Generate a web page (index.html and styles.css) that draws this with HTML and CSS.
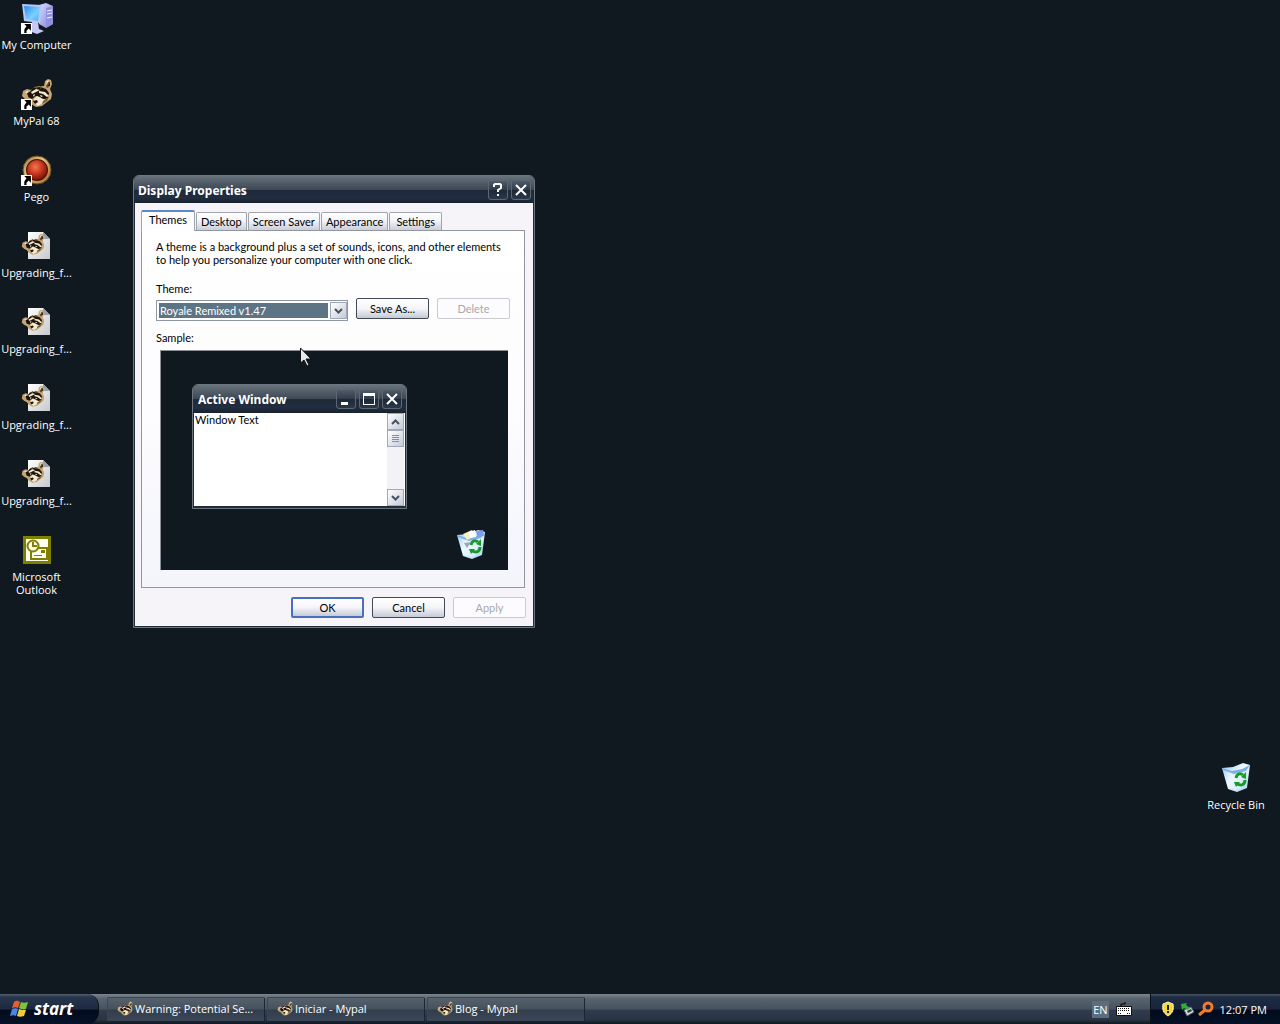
FILE: index.html
```html
<!DOCTYPE html>
<html lang="en">
<head>
<meta charset="utf-8">
<title>Desktop</title>
<link rel="stylesheet" href="styles.css">
</head>
<body>
<svg class="defs" aria-hidden="true">
  <defs>
    <linearGradient id="screen" x1="0" y1="0" x2="1" y2="1"><stop offset="0" stop-color="#2a8cf0"/><stop offset=".6" stop-color="#7fd0ff"/><stop offset="1" stop-color="#4aa6f5"/></linearGradient>
    <linearGradient id="tower" x1="0" y1="0" x2="1" y2="1"><stop offset="0" stop-color="#d8dcff"/><stop offset="1" stop-color="#7c7fd6"/></linearGradient>
    <radialGradient id="ball" cx=".42" cy=".35" r=".65"><stop offset="0" stop-color="#f07850"/><stop offset=".5" stop-color="#cc3a20"/><stop offset="1" stop-color="#7a1408"/></radialGradient>
    <linearGradient id="ring" x1="0" y1="0" x2="1" y2="1"><stop offset="0" stop-color="#9a7a3c"/><stop offset=".4" stop-color="#e2c487"/><stop offset="1" stop-color="#a5642c"/></linearGradient>
    <linearGradient id="paper" x1="0" y1="0" x2="1" y2="1"><stop offset="0" stop-color="#fff"/><stop offset="1" stop-color="#c6c8cc"/></linearGradient>
    <linearGradient id="glass" x1="0" y1="0" x2="1" y2="1"><stop offset="0" stop-color="#8fc4f4"/><stop offset=".45" stop-color="#effaff"/><stop offset="1" stop-color="#a5cef4"/></linearGradient>
    <symbol id="shortcut" viewBox="0 0 10 10"><path fill="#fff" d="M0 0h10v10H0z"/><path fill="#000" d="M3 1h6v6L7 5 5 7v2H3V6l2-3z"/></symbol>
    <symbol id="raccoon" viewBox="0 0 32 32">
      <path fill="#c4a474" d="M2 13l4-2 4 1 4-3 6-1 3 0 1-5 3-2 3 1 1 4-2 5 2 5-1 5-4 3-5 4-6 1-5-3-2-3-4-2-3-3z"/>
      <path fill="#1b130c" d="M8 15l4-5 7-1 6 2 3 4-1 5-5 2-3-3-4-1-4 3-4-2z"/>
      <path fill="#6a4b28" d="M14 9l2-1 0 4zM19 8l3 1-3 2zM25 8l2-4 2 0-1 5-2 1z"/>
      <path fill="#f4ead0" d="M10 14l5-3 4 1-4 2-4 2zM18 13l6 1 4 4-2 1-4-3-4-1zM13 21l3-3 4 2 5 2-3 3-5 3-4-3zM4 14l3-1 0 3zM25 7l1-4 2-1-2 4z"/>
      <path fill="#1b130c" d="M12 23l4-1 1 2-3 2zM6 15l3-1 0 4-2 0zM27 8l2-4 0 4z"/>
      <path fill="#fff" d="M19 17l3 1-2 1zM12 17l2-1-1 3z"/>
      <path fill="#7a5932" d="M22 23l6-4-2 4-5 3z"/>
    </symbol>
    <symbol id="computer" viewBox="0 0 32 32">
      <path fill="url(#tower)" d="M18 3l7-2 7 3v18l-7 4-7-4z"/><path fill="#8f91df" d="M25 6l7-2v18l-7 4z"/>
      <path stroke="#f2f3ff" d="M26 9l5-1M26 12l5-1M26 16l5-1"/>
      <path fill="#c7c9f5" d="M11 20h6l1 7 5 2-7 3-8-3z"/>
      <path fill="#b8c8f2" d="M1 2l20 1-2 18L3 19z"/><path fill="url(#screen)" d="M3 4l16 1-2 14L5 17z"/>
    </symbol>
    <symbol id="pego" viewBox="0 0 32 32"><circle cx="16" cy="16" r="14" fill="url(#ring)" stroke="#6b4a1c"/><circle cx="16" cy="16" r="11" fill="#4c1208"/><circle cx="16" cy="16" r="10" fill="url(#ball)"/></symbol>
    <symbol id="page" viewBox="0 0 32 32"><path fill="url(#paper)" d="M7 2h15l7 7v20H7z"/><path fill="#9da0a6" d="M22 2l7 7h-7z"/><svg x="0" y="3" width="24" height="24"><use href="#raccoon"/></svg></symbol>
    <symbol id="outlook" viewBox="0 0 32 32">
      <path fill="#808000" d="M2 2h28v28H2z"/><path fill="#fffff0" d="M5 5h22v22H5z"/>
      <path fill="#fffff0" stroke="#808000" stroke-width="2" d="M10 14h16v11H10z"/><path fill="#808000" d="M20 16h4v3h-4zM13 21h8v1h-8z"/>
      <circle cx="12" cy="12" r="5.500" fill="#fffff0" stroke="#808000" stroke-width="2"/><path fill="none" stroke="#808000" stroke-width="2" d="M12 8v4h4"/>
    </symbol>
    <symbol id="bin" viewBox="0 0 32 32">
      <path fill="url(#glass)" d="M2 6l11-1 10-4 7 2-3 23-10 4-9-3z"/>
      <path fill="#7fb0e4" d="M2 6l10 3 10-2 8-4-4 6-12 3-11-4z"/>
      <path fill="#e6f6ff" d="M7 10l8 3 8-3-2 16-5 2-6-3z" opacity=".6"/>
      <path fill="none" stroke="#159b26" stroke-width="3" d="M16 16c1-5 5-5 7-3M25 18c0 5-4 6-8 4"/><path fill="#159b26" d="M21 15l5-5 0 7zM14 20l6 0-4 5z"/>
    </symbol>
    <symbol id="bin-full" viewBox="0 0 32 32"><use href="#bin"/><path fill="#f5efc2" d="M8 5l9-4 3 6-8 4z"/><path fill="#fff" d="M14 3l6-2 1 7-6 1z"/><path fill="#7e9ee8" d="M21 2l7-1 1 6-7 1z"/><path fill="#9ca6be" d="M9 14l7-1-4 6z"/></symbol>
    <symbol id="flag" viewBox="0 0 20 18">
      <path fill="#e8602c" d="M4 2c3-2 4-1 6 0L8 8C6 7 5 7 2 8z"/><path fill="#7cc440" d="M11 2c2 1 4 1 7 0l-2 7c-3 1-5 0-7-1z"/>
      <path fill="#4a83e8" d="M2 9c3-1 4-1 6 0l-2 7c-2-1-3-1-6 0z"/><path fill="#f4cc38" d="M9 9c2 1 4 1 7 1l-2 6c-3 1-5 1-7 0z"/>
    </symbol>
  </defs>
</svg>

<main class="desktop">
  <nav class="icons" aria-label="Desktop icons">
    <a class="icon" href="#"><span class="pic"><svg><use href="#computer"/></svg><svg class="badge"><use href="#shortcut"/></svg></span>My Computer</a>
    <a class="icon" href="#"><span class="pic"><svg><use href="#raccoon"/></svg><svg class="badge"><use href="#shortcut"/></svg></span>MyPal 68</a>
    <a class="icon" href="#"><span class="pic"><svg><use href="#pego"/></svg><svg class="badge"><use href="#shortcut"/></svg></span>Pego</a>
    <a class="icon" href="#"><span class="pic"><svg><use href="#page"/></svg></span>Upgrading_f...</a>
    <a class="icon" href="#"><span class="pic"><svg><use href="#page"/></svg></span>Upgrading_f...</a>
    <a class="icon" href="#"><span class="pic"><svg><use href="#page"/></svg></span>Upgrading_f...</a>
    <a class="icon" href="#"><span class="pic"><svg><use href="#page"/></svg></span>Upgrading_f...</a>
    <a class="icon" href="#"><span class="pic"><svg><use href="#outlook"/></svg></span>Microsoft Outlook</a>
  </nav>
  <a class="icon recycle" href="#"><span class="pic"><svg><use href="#bin"/></svg></span>Recycle Bin</a>

  <section class="window dialog" aria-labelledby="dialog-title">
    <header class="titlebar">
      <h1 id="dialog-title">Display Properties</h1>
      <button class="caption" aria-label="Help"><svg viewBox="0 0 18 18"><path fill="none" stroke="#fff" stroke-width="2" d="M5 6V4l1-1h5l1 1v3L9 9v2M9 13v2"/></svg></button>
      <button class="caption" aria-label="Close"><svg viewBox="0 0 18 18"><path stroke="#fff" stroke-width="2" d="M4 4l10 10M14 4L4 14"/></svg></button>
    </header>
    <div class="body">
      <div class="tabs" role="tablist">
        <button class="tab active" role="tab">Themes</button>
        <button class="tab" role="tab">Desktop</button>
        <button class="tab" role="tab">Screen Saver</button>
        <button class="tab" role="tab">Appearance</button>
        <button class="tab" role="tab">Settings</button>
      </div>
      <div class="panel">
        <p class="intro">A theme is a background plus a set of sounds, icons, and other elements<br>to help you personalize your computer with one click.</p>
        <label class="caption-text" for="theme">Theme:</label>
        <div class="row">
          <div class="combo">
            <select id="theme"><option>Royale Remixed v1.47</option></select>
            <span class="arrow"><svg viewBox="0 0 9 6"><path fill="none" stroke="#46525f" stroke-width="2" d="M1 1l3.500 3.500L8 1"/></svg></span>
          </div>
          <button class="push">Save As...</button>
          <button class="push" disabled>Delete</button>
        </div>
        <p class="caption-text">Sample:</p>
        <div class="sample">
          <div class="window mini">
            <div class="titlebar">
              <h2>Active Window</h2>
              <button class="caption" aria-label="Minimize"><svg viewBox="0 0 18 18"><path fill="#fff" d="M4 12h7v3H4z"/></svg></button>
              <button class="caption" aria-label="Maximize"><svg viewBox="0 0 18 18"><path fill="#fff" d="M3 3h12v12H3zM4 6v8h10V6z" fill-rule="evenodd"/></svg></button>
              <button class="caption" aria-label="Close"><svg viewBox="0 0 18 18"><path stroke="#fff" stroke-width="2" d="M4 4l10 10M14 4L4 14"/></svg></button>
            </div>
            <div class="document">
              <p>Window Text</p>
              <div class="scrollbar">
                <span class="arrow"><svg viewBox="0 0 9 6"><path fill="none" stroke="#46525f" stroke-width="2" d="M1 5l3.500-3.500L8 5"/></svg></span>
                <span class="arrow thumb"><svg viewBox="0 0 7 8"><path stroke="#8590a0" d="M0 .5h7M0 2.500h7M0 4.500h7M0 6.500h7"/></svg></span>
                <span class="arrow end"><svg viewBox="0 0 9 6"><path fill="none" stroke="#46525f" stroke-width="2" d="M1 1l3.500 3.500L8 1"/></svg></span>
              </div>
            </div>
          </div>
          <svg class="sample-bin"><use href="#bin-full"/></svg>
        </div>
      </div>
      <div class="actions">
        <button class="push default">OK</button>
        <button class="push">Cancel</button>
        <button class="push" disabled>Apply</button>
      </div>
    </div>
  </section>
  <svg class="pointer" viewBox="0 0 12 20"><path fill="#e8e8e8" stroke="#101418" d="M.5 1v15l3.500-3 3 6 2-1-3-6h5z"/></svg>
</main>

<footer class="taskbar">
  <button class="start"><svg><use href="#flag"/></svg>start</button>
  <div class="tasks">
    <button class="task"><svg><use href="#raccoon"/></svg>Warning: Potential Se...</button>
    <button class="task"><svg><use href="#raccoon"/></svg>Iniciar - Mypal</button>
    <button class="task"><svg><use href="#raccoon"/></svg>Blog - Mypal</button>
  </div>
  <div class="language">
    <span class="lang">EN</span>
    <svg class="keyboard" viewBox="0 0 16 14"><path fill="none" stroke="#000" d="M5 4V2h4V0"/><path fill="#fff" stroke="#111" d="M.5 4.500h15v9H.5z"/><path stroke="#111" stroke-dasharray="1 1" d="M2 6.500h12M2 8.500h12M2 11.500h3M11 11.500h3"/></svg>
  </div>
  <div class="tray">
    <svg viewBox="0 0 16 16"><path fill="#f5d93a" stroke="#f8f3c0" d="M8 1l5 2c1 5 0 9-5 12C3 12 2 8 3 3z"/><path fill="#222" d="M7 4h2v5H7zM7 10h2v2H7z"/></svg>
    <svg viewBox="0 0 16 16"><path fill="#d4dae0" stroke="#59636e" d="M5 9l7-3 3 5-7 4z"/><path fill="#333" d="M8 10l4-2 1 2-4 2z"/><path fill="#2fae3c" d="M2 3l6-1-1 2 4 3-2 2-4-2-2 2z"/></svg>
    <svg viewBox="0 0 16 16"><circle cx="10" cy="6" r="4" fill="none" stroke="#f47a28" stroke-width="3"/><path stroke="#f47a28" stroke-width="3" d="M7 9l-6 5"/></svg>
    <time>12:07 PM</time>
  </div>
</footer>
</body>
</html>
```
FILE: styles.css
```css
* { box-sizing: border-box; }

body {
  margin: 0;
  min-height: 100vh;
  display: flex;
  flex-direction: column;
  background: #101920;
  color: #000;
  font: 11px/13px Lato, "Liberation Sans", sans-serif;
}

h1, h2, p { margin: 0; }
button, select { font: inherit; color: inherit; margin: 0; padding: 0; border: 0; }
svg { display: block; }
.defs { position: absolute; width: 0; height: 0; }

.desktop { flex: 1; position: relative; }

/* desktop icons */
.icons { width: 73px; padding-top: 2px; }
.icon {
  display: block;
  height: 76px;
  color: #fff;
  text-align: center;
  text-decoration: none;
  font: 11px/13px "Open Sans", "Noto Sans", sans-serif;
}
.pic { display: block; position: relative; width: 32px; height: 32px; margin: 0 auto 4px; }
.pic svg { width: 32px; height: 32px; }
.pic .badge { position: absolute; left: 0; bottom: 0; width: 11px; height: 11px; }
.recycle { position: absolute; right: 7px; bottom: 156px; width: 74px; }

/* windows */
.window {
  border: 1px solid #6c7680;
  border-radius: 6px 6px 0 0;
  background: #222d3a;
  overflow: hidden;
}
.titlebar {
  display: flex;
  align-items: center;
  gap: 3px;
  height: 27px;
  padding: 0 3px 0 4px;
  background: linear-gradient(#69737c 0, #4d5863 30%, #3c4855 50%, #1d2939 52%, #222e40 80%, #17212f 100%);
  color: #fff;
}
.titlebar h1, .titlebar h2 { flex: 1; font: bold 12px/16px "Noto Sans", sans-serif; padding-top: 2px; }
.caption {
  width: 20px;
  height: 20px;
  border: 1px solid #5c6773;
  border-radius: 3px;
  background: linear-gradient(#4f5b67, #2f3b49 50%, #1e2938 52%, #2c3847);
}
.caption svg { width: 18px; height: 18px; }

.dialog { position: absolute; left: 133px; top: 175px; width: 402px; }
.body { margin: 0 1px 1px; padding: 7px 8px 7px 6px; background: #f6f4f8; }

.tabs { display: flex; align-items: flex-end; gap: 1px; height: 20px; }
.tab {
  height: 18px;
  padding: 0 4px;
  border: 1px solid #a0a4ae;
  border-bottom: 0;
  border-radius: 2px 2px 0 0;
  background: linear-gradient(#fff, #f4f4f8 45%, #c9ced8);
}
.tab.active {
  height: 21px;
  margin-bottom: -1px;
  padding: 0 7px 4px;
  border-top: 2px solid #5b86d0;
  background: #fdfdff;
  z-index: 1;
}
.tab:last-child { padding: 0 6px; }
.panel {
  padding: 9px 14px 17px;
  border: 1px solid #9296a0;
  background: linear-gradient(#fff 0, #fdfcfe 50%, #f3f5fb);
}
.intro { white-space: nowrap; }
.caption-text { display: block; margin-top: 16px; }
.row { display: flex; gap: 8px; margin-top: 3px; }
.combo {
  flex: 1;
  display: flex;
  gap: 1px;
  height: 21px;
  margin-top: 2px;
  padding: 1px 0 1px 1px;
  border: 1px solid #8f96a4;
  background: #fff;
}
.combo select {
  flex: 1;
  appearance: none;
  padding: 0 1px;
  border: 1px solid #fff;
  border-radius: 0;
  background: #5d7485;
  color: #fff;
}
.arrow {
  display: flex;
  align-items: center;
  justify-content: center;
  width: 17px;
  height: 17px;
  border: 1px solid #a0a9b8;
  background: linear-gradient(135deg, #fff, #c5cad8);
}
.arrow svg { width: 9px; height: 6px; }
.push {
  width: 73px;
  height: 21px;
  border: 1px solid #424a58;
  border-radius: 2px;
  background: linear-gradient(#fff, #f5f5f8 50%, #c6cad4);
}
.push.default { border: 2px solid #486fc0; }
.push:disabled { border-color: #cbcbcf; background: #fcfcfe; color: #a8a8ac; }

.row + .caption-text { margin-top: 10px; }
.sample {
  position: relative;
  height: 220px;
  margin: 6px 2px 0 4px;
  border-left: 1px solid #8c9094;
  border-top: 1px solid #8c9094;
  background: #101920;
}
.mini { position: absolute; left: 31px; top: 33px; width: 215px; }
.mini .titlebar { height: 28px; padding: 0 4px 0 5px; }
.document { display: flex; height: 93px; margin: 0 1px 2px; background: #fff; }
.document p { flex: 1; padding: 0 1px; }
.scrollbar { display: flex; flex-direction: column; margin-right: 1px; background: #f3f3f7; }
.thumb svg { width: 7px; height: 8px; }
.scrollbar .end { margin-top: auto; }
.sample-bin { position: absolute; right: 21px; bottom: 9px; width: 32px; height: 32px; }

.actions { display: flex; justify-content: flex-end; gap: 8px; margin: 9px -1px 0 0; padding-bottom: 1px; }
.pointer { position: absolute; left: 300px; top: 347px; width: 12px; height: 20px; }

/* taskbar */
.taskbar {
  display: flex;
  height: 30px;
  background: linear-gradient(#7b858e 0, #58646f 15%, #46525f 50%, #303c4b 54%, #293544 85%, #10171f 100%);
  color: #fff;
  font: 11px/13px "Open Sans", "Noto Sans", sans-serif;
}
.start {
  display: flex;
  align-items: center;
  gap: 4px;
  width: 99px;
  padding-left: 10px;
  border-right: 1px solid #0a1018;
  border-radius: 0 12px 12px 0;
  background: linear-gradient(#56616e 0, #27364c 10%, #1c2a41 50%, #020a1c 54%, #07132a);
  font: italic bold 17px/20px "Open Sans", sans-serif;
}
.start svg { width: 20px; height: 18px; }
.tasks { flex: 1; display: flex; gap: 2px; padding: 3px 0 2px 8px; }
.task {
  display: flex;
  align-items: center;
  gap: 2px;
  width: 158px;
  padding: 0 0 2px 9px;
  border: 1px solid #3a4653;
  border-right-color: #1c2632;
  border-bottom-color: #18212c;
  border-radius: 2px;
  background: linear-gradient(#56616d, #45515e 48%, #323e4d 52%, #3b4756);
}
.task svg { width: 16px; height: 16px; }
.language { display: flex; align-items: center; gap: 7px; padding-right: 18px; }
.lang { padding: 2px 1px; background: #5c6d80; }
.keyboard { width: 16px; height: 14px; }
.tray {
  display: flex;
  align-items: center;
  gap: 3px;
  padding: 0 13px 0 9px;
  border-left: 1px solid #0a1018;
  background: linear-gradient(#4b5765 0, #1d2c43 10%, #18253c 50%, #020a1c 54%, #061127);
}
.tray svg { width: 16px; height: 16px; }
.tray time { margin-left: 3px; }
```
